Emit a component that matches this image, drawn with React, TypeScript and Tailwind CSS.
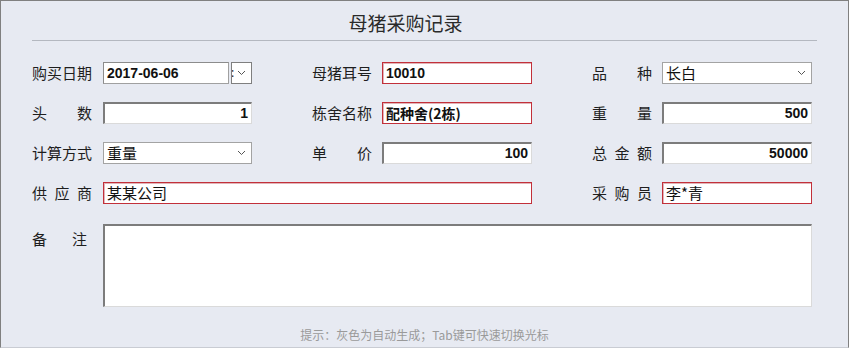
const cjk = "font-['Noto_Sans_CJK_SC','Noto_Sans',sans-serif]";
const num = "font-['Liberation_Sans','Noto_Sans_CJK_SC',sans-serif]";

const redBox = "h-[22px] bg-white border border-[#c2303a] shadow-[inset_1px_1px_0_#e2b4b8] flex items-center px-[3px]";
const grayBox = "h-[22px] bg-white border-t-2 border-l-2 border-[#7c7c7c] border-b border-r border-b-[#dadada] border-r-[#dadada] flex items-center justify-end px-[3px]";
const selBox = "h-[22px] bg-white border border-[#a3a3a3] flex items-center px-[3px]";

function Chevron() {
  return (
    <svg width="9" height="6" viewBox="0 0 9 6" className="shrink-0">
      <path d="M1 1 L4.5 4.5 L8 1" fill="none" stroke="#555" strokeWidth="1" />
    </svg>
  );
}

function Label({ text, w = "w-[60px]" }: { text: string; w?: string }) {
  return (
    <div className={`${w} shrink-0 flex justify-between text-[15px] leading-[22px] text-[#1e1e1e] ${cjk}`}>
      {text.split("").map((c, i) => (
        <span key={i}>{c}</span>
      ))}
    </div>
  );
}

export default function App() {
  return (
    <div className="w-[851px] h-[350px] bg-white">
      <div className="w-[849px] h-[348px] bg-[#e7eaf2] border-l border-t border-r border-[#808080] border-b border-b-[#c9ccd3]">
        <div className="mx-[31px] h-[40px] border-b border-[#b4b8c0] pt-[12px] pr-[38px] text-center">
          <span className={`text-[19px] leading-[19px] text-[#2a2a2a] ${cjk}`}>母猪采购记录</span>
        </div>

        <div className="ml-[31px] mt-[21px] flex flex-col gap-[18px]">
          {/* row 1 */}
          <div className="flex items-center">
            <div className="w-[280px] flex items-center">
              <Label text="购买日期" />
              <div className="ml-[11px] w-[126px] h-[22px] bg-white border border-[#a0a0a0] border-t-[#8c8c8c] border-l-[#8c8c8c] flex items-center px-[3px]">
                <span className={`text-[14px] font-bold text-[#111] ${num}`}>2017-06-06</span>
              </div>
              <div className="ml-[2px] w-[21px] h-[22px] bg-white border border-[#7f7f7f] flex items-center overflow-hidden">
                <span className="text-[12px] leading-none text-[#222] -ml-[1px] mr-[3px]">:</span>
                <Chevron />
              </div>
            </div>
            <div className="w-[280px] flex items-center">
              <Label text="母猪耳号" />
              <div className={`ml-[10px] w-[150px] ${redBox}`}>
                <span className={`text-[14px] font-bold text-[#111] ${num}`}>10010</span>
              </div>
            </div>
            <div className="w-[220px] flex items-center">
              <Label text="品种" />
              <div className={`ml-[10px] w-[150px] justify-between ${selBox}`}>
                <span className={`text-[15px] text-[#111] ${cjk}`}>长白</span>
                <span className="mr-[2px]"><Chevron /></span>
              </div>
            </div>
          </div>

          {/* row 2 */}
          <div className="flex items-center">
            <div className="w-[280px] flex items-center">
              <Label text="头数" />
              <div className={`ml-[11px] w-[149px] ${grayBox}`}>
                <span className={`text-[14px] font-bold text-[#111] ${num}`}>1</span>
              </div>
            </div>
            <div className="w-[280px] flex items-center">
              <Label text="栋舍名称" />
              <div className={`ml-[10px] w-[150px] ${redBox}`}>
                <span className={`text-[14px] font-bold text-[#111] ${cjk}`}>配种舍(2栋)</span>
              </div>
            </div>
            <div className="w-[220px] flex items-center">
              <Label text="重量" />
              <div className={`ml-[10px] w-[150px] ${grayBox}`}>
                <span className={`text-[14px] font-bold text-[#111] ${num}`}>500</span>
              </div>
            </div>
          </div>

          {/* row 3 */}
          <div className="flex items-center">
            <div className="w-[280px] flex items-center">
              <Label text="计算方式" />
              <div className={`ml-[11px] w-[149px] justify-between ${selBox}`}>
                <span className={`text-[15px] text-[#111] ${cjk}`}>重量</span>
                <span className="mr-[2px]"><Chevron /></span>
              </div>
            </div>
            <div className="w-[280px] flex items-center">
              <Label text="单价" />
              <div className={`ml-[10px] w-[150px] ${grayBox}`}>
                <span className={`text-[14px] font-bold text-[#111] ${num}`}>100</span>
              </div>
            </div>
            <div className="w-[220px] flex items-center">
              <Label text="总金额" />
              <div className={`ml-[10px] w-[150px] ${grayBox}`}>
                <span className={`text-[14px] font-bold text-[#111] ${num}`}>50000</span>
              </div>
            </div>
          </div>

          {/* row 4 */}
          <div className="flex items-center">
            <div className="w-[560px] flex items-center">
              <Label text="供应商" />
              <div className={`ml-[11px] w-[429px] ${redBox}`}>
                <span className={`text-[15px] text-[#111] ${cjk}`}>某某公司</span>
              </div>
            </div>
            <div className="w-[220px] flex items-center">
              <Label text="采购员" />
              <div className={`ml-[10px] w-[150px] ${redBox}`}>
                <span className={`text-[15px] text-[#111] ${cjk}`}>李*青</span>
              </div>
            </div>
          </div>

          {/* notes */}
          <div className="flex items-start mt-[2px]">
            <div className="pt-[4px] pr-[5px]">
              <Label text="备注" w="w-[55px]" />
            </div>
            <div className="ml-[11px] w-[709px] h-[83px] bg-white border-t-2 border-l-2 border-[#7c7c7c] border-b border-r border-b-[#dadada] border-r-[#dadada]" />
          </div>
        </div>

        <div className={`mt-[21px] text-center text-[12px] leading-[14px] text-[#9a9a9a] ${cjk}`}>
          提示：灰色为自动生成；Tab键可快速切换光标
        </div>
      </div>
    </div>
  );
}
